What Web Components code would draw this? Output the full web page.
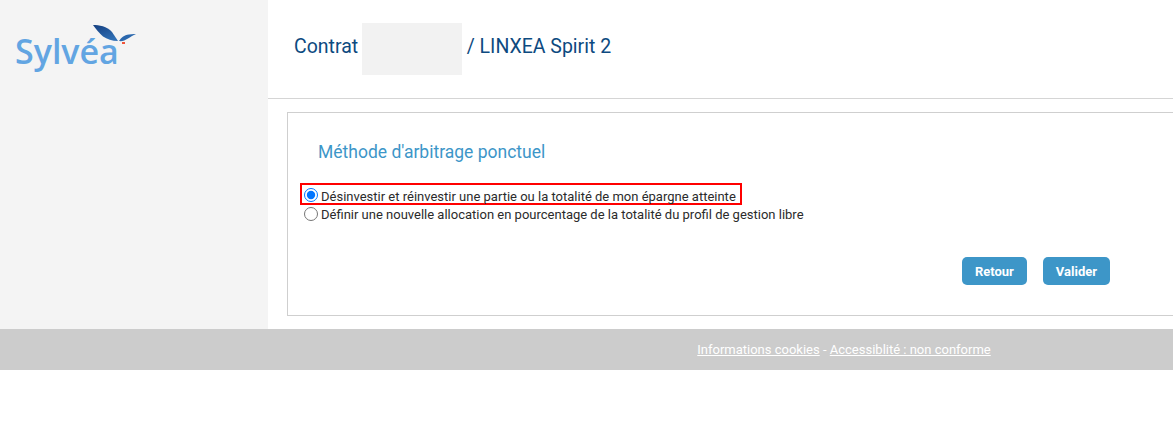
<!DOCTYPE html>
<html lang="fr">
<head>
<meta charset="utf-8">
<title>Arbitrage ponctuel</title>
<style>
html, body { margin: 0; padding: 0; background: #fff; }
body { font-family: Roboto, "Liberation Sans", sans-serif; overflow: hidden; }
</style>
</head>
<body>
<app-shell>
    <side-bar slot="side"></side-bar>
    <page-header slot="head">
        <span>Contrat</span>
        <span slot="rest">/ LINXEA Spirit 2</span>
    </page-header>
    <method-card slot="main" heading="Méthode d'arbitrage ponctuel">
        <radio-row checked boxed>Désinvestir et réinvestir une partie ou la totalité de mon épargne atteinte</radio-row>
        <radio-row>Définir une nouvelle allocation en pourcentage de la totalité du profil de gestion libre</radio-row>
        <blue-button slot="actions">Retour</blue-button>
        <blue-button slot="actions">Valider</blue-button>
    </method-card>
    <page-footer slot="foot"></page-footer>
</app-shell>

<script>
class AppShell extends HTMLElement {
    constructor() {
        super();
        this.shadowDOM = this.attachShadow({mode: "open"});
    }

    connectedCallback() {
        this.shadowDOM.innerHTML = `
        <style>
        :host { display: block; }
        .top {
            display: grid;
            grid-template-columns: 268px 1fr;
            height: 329px;
        }
        .right { min-width: 0; overflow: hidden; }
        </style>
        <div class="top">
            <slot name="side"></slot>
            <div class="right">
                <slot name="head"></slot>
                <slot name="main"></slot>
            </div>
        </div>
        <slot name="foot"></slot>
        `;
    }
}

class SideBar extends HTMLElement {
    constructor() {
        super();
        this.shadowDOM = this.attachShadow({mode: "open"});
    }

    connectedCallback() {
        this.shadowDOM.innerHTML = `
        <style>
        :host {
            display: block;
            background: #f4f4f4;
            padding: 25px 0 0 15px;
        }
        .logo { position: relative; width: 125px; height: 50px; }
        .name {
            font-family: "Open Sans", sans-serif;
            font-size: 34px;
            font-weight: 600;
            line-height: 50px;
            color: #62a5e2;
            padding-top: 1px;
        }
        svg { position: absolute; left: 78px; top: 0; }
        </style>
        <div class="logo">
            <div class="name">Sylvéa</div>
            <svg width="44" height="20" viewBox="0 0 44 20">
                <defs>
                    <linearGradient id="wing" x1="0" y1="0" x2="0.6" y2="1">
                        <stop offset="0" stop-color="#153f80"/>
                        <stop offset="1" stop-color="#2f6fb5"/>
                    </linearGradient>
                </defs>
                <path d="M0 0 C6 0 14 1 19 7 C21 10 23 13 25 16 C19 16 14 14 10 11.500 C6 8 3 4 0 0 Z" fill="url(#wing)"/>
                <path d="M26 16 C28 13 31 10 36 9.500 C38 9 41 8.800 43 9 C40 10 38 12 35 13.500 C32 15.500 29 16.500 26 16 Z" fill="#2a67ad"/>
                <rect x="29" y="17" width="3" height="2" fill="#f0553a"/>
            </svg>
        </div>
        `;
    }
}

class PageHeader extends HTMLElement {
    constructor() {
        super();
        this.shadowDOM = this.attachShadow({mode: "open"});
    }

    connectedCallback() {
        this.shadowDOM.innerHTML = `
        <style>
        :host {
            display: flex;
            align-items: center;
            height: 93px;
            padding: 0 0 5px 26px;
            border-bottom: 1px solid #d5d5d5;
            font-size: 19.5px;
            color: #0d4a80;
        }
        .mask {
            width: 100px;
            height: 52px;
            margin: 5px 4.5px 0 4px;
            background: #f2f2f2;
        }
        </style>
        <slot></slot>
        <div class="mask"></div>
        <slot name="rest"></slot>
        `;
    }
}

class MethodCard extends HTMLElement {
    constructor() {
        super();
        this.shadowDOM = this.attachShadow({mode: "open"});
    }

    connectedCallback() {
        this.shadowDOM.innerHTML = `
        <style>
        :host {
            display: block;
            box-sizing: border-box;
            height: 204px;
            margin: 13px -2px 0 19px;
            border: 1px solid #cfcfcf;
            padding: 28px 0 0 12px;
        }
        h2 {
            margin: 0 0 0 18px;
            font-size: 17.5px;
            font-weight: 400;
            line-height: 22px;
            color: #3d96c8;
        }
        .options { margin-top: 20px; }
        .actions {
            display: flex;
            justify-content: flex-end;
            gap: 16px;
            margin: 33px 64px 0 0;
        }
        </style>
        <h2>${this.getAttribute("heading")}</h2>
        <div class="options"><slot></slot></div>
        <div class="actions"><slot name="actions"></slot></div>
        `;
    }
}

class RadioRow extends HTMLElement {
    constructor() {
        super();
        this.shadowDOM = this.attachShadow({mode: "open"});
    }

    connectedCallback() {
        const boxed = this.hasAttribute("boxed");
        this.shadowDOM.innerHTML = `
        <style>
        :host { display: block; }
        label {
            display: ${boxed ? "inline-flex" : "flex"};
            align-items: flex-start;
            box-sizing: border-box;
            height: ${boxed ? 22 : 18}px;
            padding: 0 4px 0 2px;
            border: ${boxed ? "2px solid #ff0000" : "0"};
            ${boxed ? "" : "margin-left: 2px;"}
            font-size: 13px;
            line-height: 15px;
            color: #2b2b2b;
        }
        input {
            width: 14px;
            height: 14px;
            margin: ${boxed ? 3 : 1}px 3px 0 0;
            flex: none;
        }
        span { margin-top: ${boxed ? 4 : 1}px; }
        </style>
        <label><input type="radio" name="methode" ${this.hasAttribute("checked") ? "checked" : ""}><span><slot></slot></span></label>
        `;
    }
}

class BlueButton extends HTMLElement {
    constructor() {
        super();
        this.shadowDOM = this.attachShadow({mode: "open"});
    }

    connectedCallback() {
        this.shadowDOM.innerHTML = `
        <style>
        :host {
            display: flex;
            align-items: center;
            height: 28px;
            padding: 0 13px;
            background: #3d96c8;
            border-radius: 5px;
            color: #fff;
            font-size: 13px;
            font-weight: 700;
        }
        </style>
        <slot></slot>
        `;
    }
}

class PageFooter extends HTMLElement {
    constructor() {
        super();
        this.shadowDOM = this.attachShadow({mode: "open"});
    }

    connectedCallback() {
        this.shadowDOM.innerHTML = `
        <style>
        :host {
            display: flex;
            justify-content: center;
            align-items: center;
            height: 41px;
            padding-left: 515px;
            background: #cccccc;
            color: #fff;
            font-size: 13px;
        }
        a { color: inherit; }
        span { white-space: pre; }
        </style>
        <span><a href="#">Informations cookies</a> - <a href="#">Accessiblité : non conforme</a></span>
        `;
    }
}

customElements.define("app-shell", AppShell);
customElements.define("side-bar", SideBar);
customElements.define("page-header", PageHeader);
customElements.define("method-card", MethodCard);
customElements.define("radio-row", RadioRow);
customElements.define("blue-button", BlueButton);
customElements.define("page-footer", PageFooter);
</script>
</body>
</html>
